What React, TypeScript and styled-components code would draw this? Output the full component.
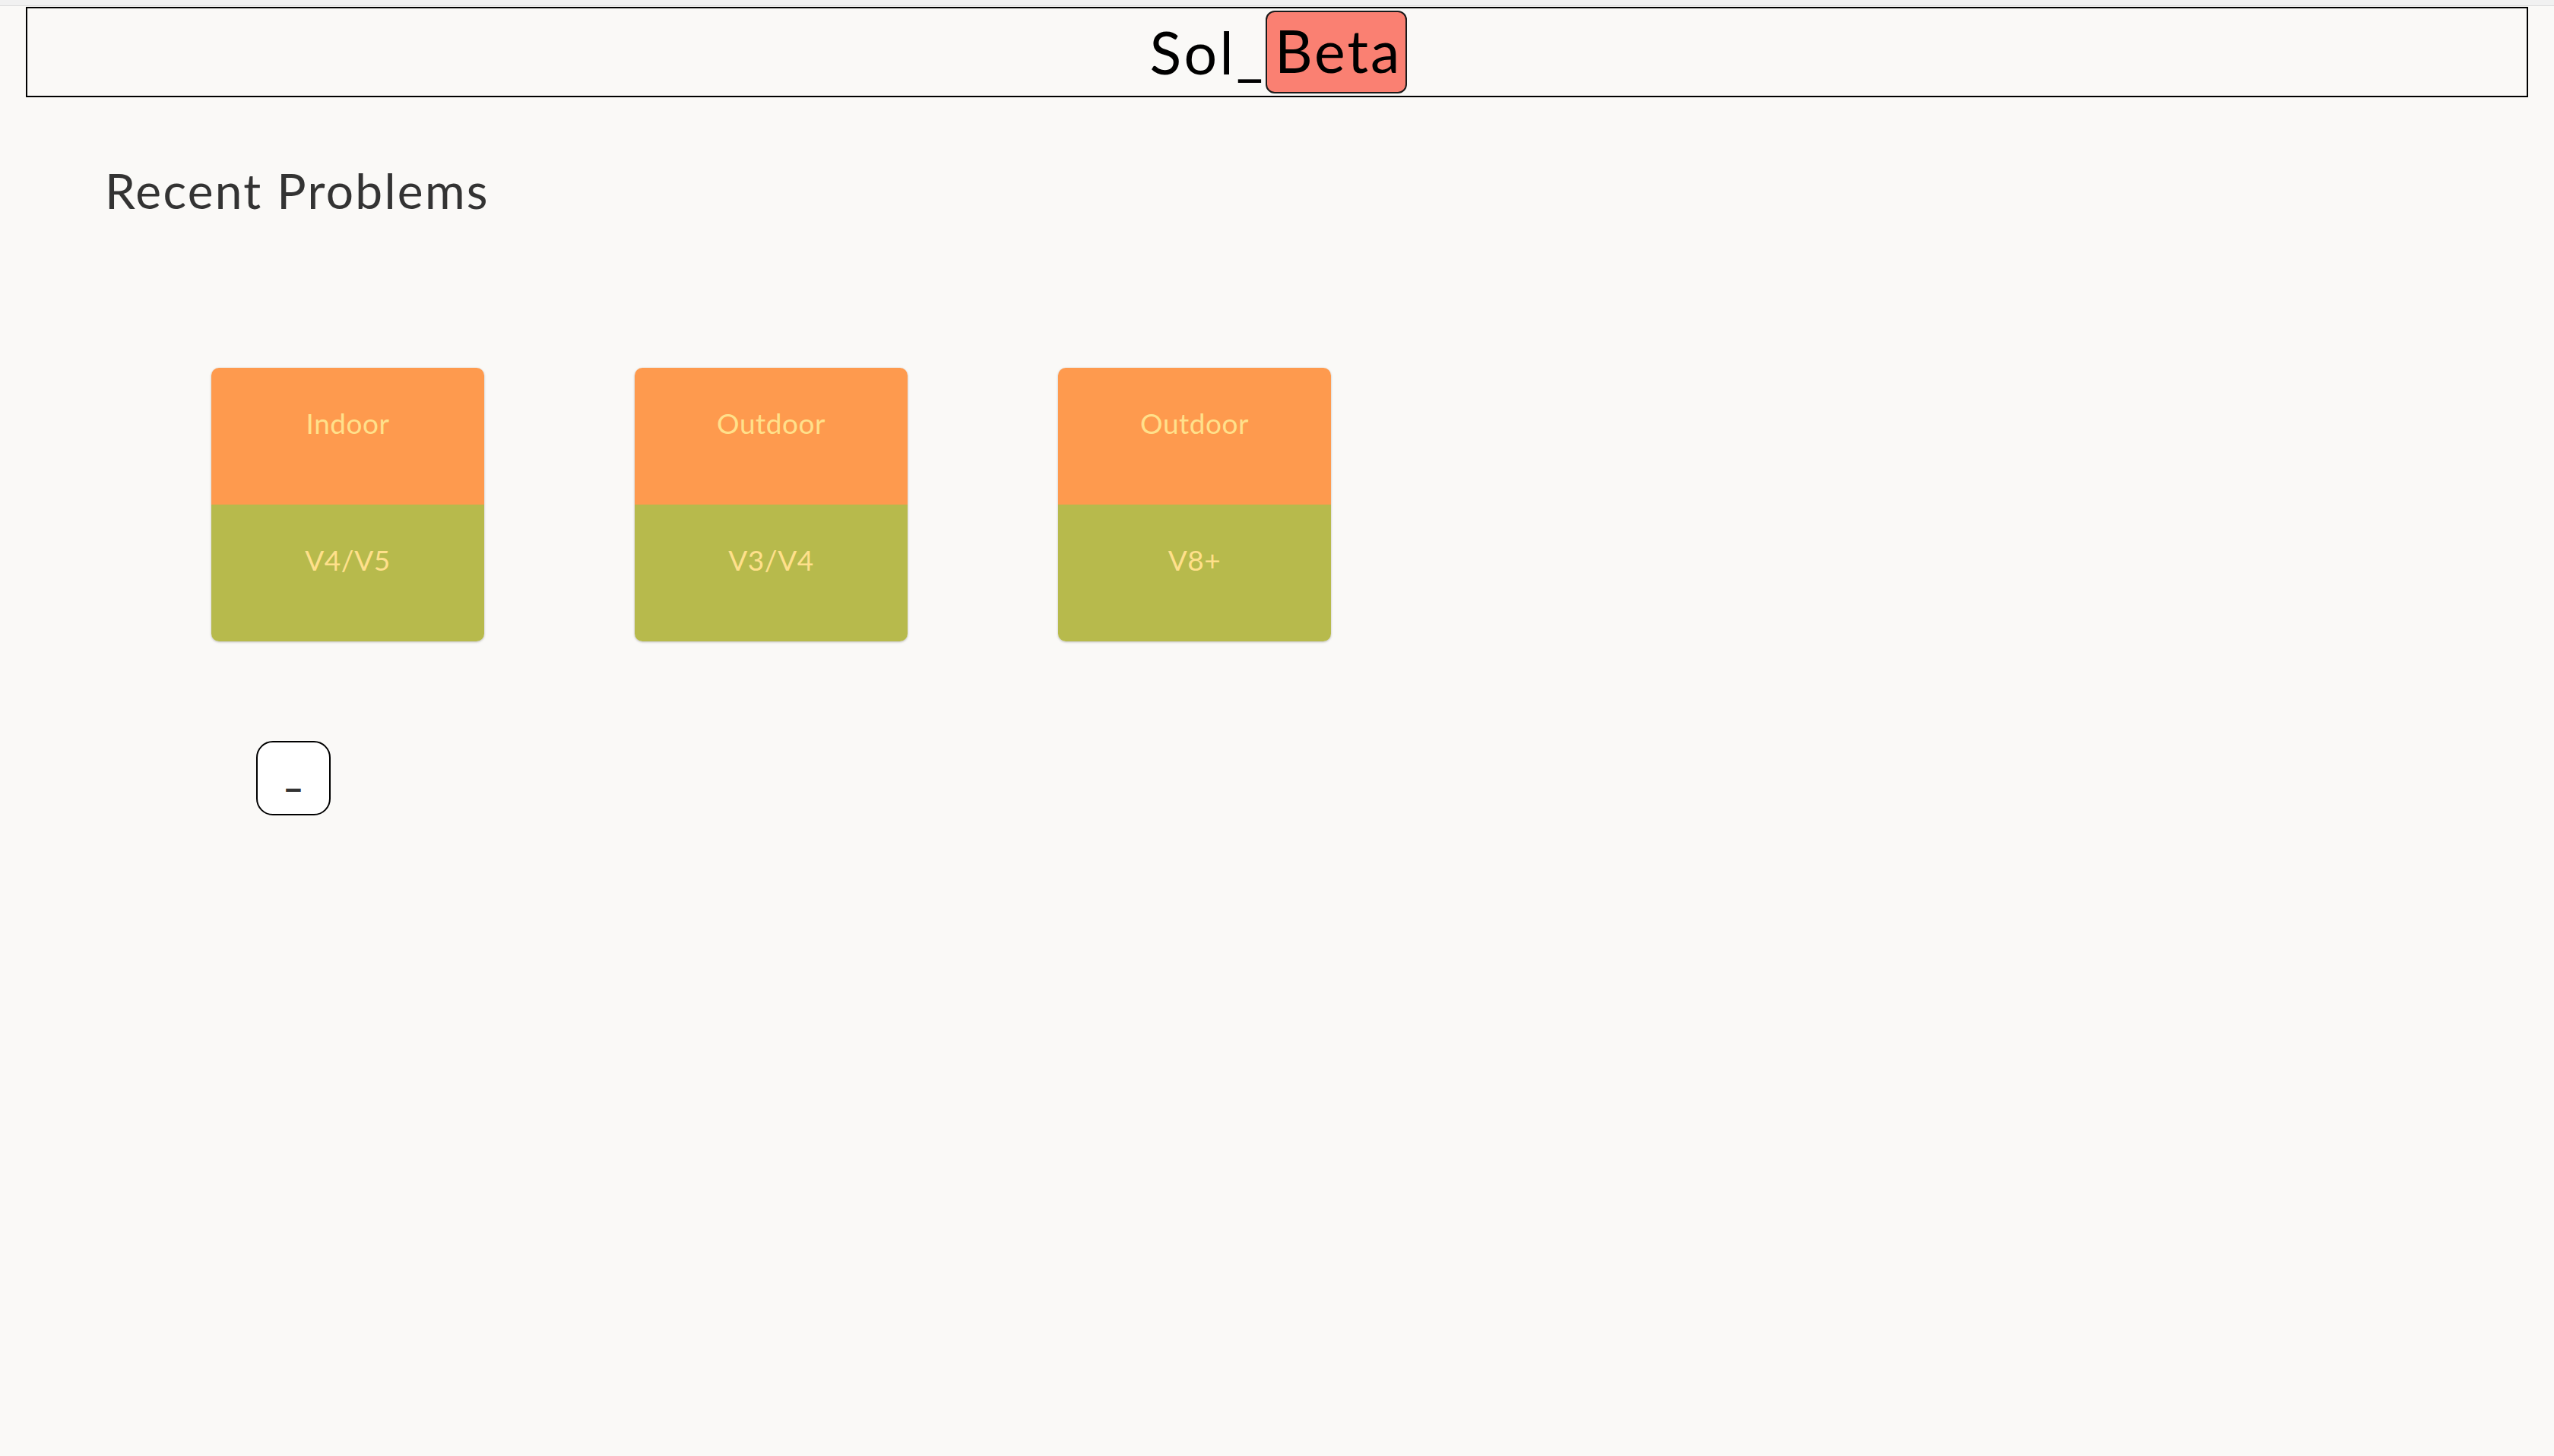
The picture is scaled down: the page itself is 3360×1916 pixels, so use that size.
import React from "react";
import styled, { createGlobalStyle } from "styled-components";

const GlobalStyle = createGlobalStyle`
  html, body {
    margin: 0;
    padding: 0;
    background: #faf9f7;
    font-family: "Lato", "Open Sans", sans-serif;
  }
  * { box-sizing: border-box; }
`;

const Page = styled.div`
  min-height: 1916px;
  background: #faf9f7;
  display: flex;
  flex-direction: column;
`;

const TopStrip = styled.div`
  height: 8px;
  background: #f1f1f1;
  border-bottom: 1px solid #dcdcdc;
`;

const Header = styled.header`
  margin: 1px 34px 0;
  height: 119px;
  border: 2px solid #000;
  display: flex;
  align-items: center;
  justify-content: center;
`;

const Title = styled.h1`
  margin: 0 0 0 4px;
  font-size: 77px;
  font-weight: 400;
  line-height: 1.2;
  letter-spacing: 3.4px;
  color: #000;
  display: flex;
  align-items: center;
`;

const BetaTag = styled.span`
  display: inline-block;
  background: #fa8072;
  border: 2px solid #1a1a1a;
  border-radius: 12px;
  padding: 4px 5px 8px 10px;
  line-height: 1.2;
  letter-spacing: 3px;
`;

const Main = styled.main`
  padding: 85px 0 0 138px;
  display: flex;
  flex-direction: column;
`;

const SectionTitle = styled.h2`
  margin: 0;
  font-size: 64px;
  font-weight: 400;
  line-height: 1.2;
  letter-spacing: 2.3px;
  color: #333;
`;

const CardRow = styled.div`
  display: flex;
  gap: 198px;
  margin: 194px 0 0 140px;
`;

const Card = styled.div`
  width: 359px;
  height: 360px;
  border-radius: 10px;
  overflow: hidden;
  box-shadow: 0 1px 3px rgba(0, 0, 0, 0.25);
  display: flex;
  flex-direction: column;
`;

const CardHalf = styled.div<{ $tone: "top" | "bottom" }>`
  height: 180px;
  background: ${(p) => (p.$tone === "top" ? "#fe9a4e" : "#b7ba4c")};
  color: #ffe08b;
  font-size: 37px;
  line-height: 1.2;
  letter-spacing: 0.5px;
  text-align: center;
  padding-top: 51px;
`;

const ToggleButton = styled.button`
  margin: 131px 0 0 199px;
  width: 98px;
  height: 98px;
  border: 2px solid #000;
  border-radius: 22px;
  background: #fff;
  color: #333;
  font-family: "Lato", sans-serif;
  font-size: 48px;
  font-weight: 700;
  line-height: 1.2;
  display: flex;
  align-items: flex-start;
  justify-content: center;
  padding: 30px 0 0;
  cursor: pointer;
`;

const problems = [
  { place: "Indoor", grade: "V4/V5" },
  { place: "Outdoor", grade: "V3/V4" },
  { place: "Outdoor", grade: "V8+" },
];

export default function App() {
  return (
    <>
      <GlobalStyle />
      <Page>
        <TopStrip />
        <Header>
          <Title>
            Sol_<BetaTag>Beta</BetaTag>
          </Title>
        </Header>
        <Main>
          <SectionTitle>Recent Problems</SectionTitle>
          <CardRow>
            {problems.map((p, i) => (
              <Card key={i}>
                <CardHalf $tone="top">{p.place}</CardHalf>
                <CardHalf $tone="bottom">{p.grade}</CardHalf>
              </Card>
            ))}
          </CardRow>
          <ToggleButton>–</ToggleButton>
        </Main>
      </Page>
    </>
  );
}
